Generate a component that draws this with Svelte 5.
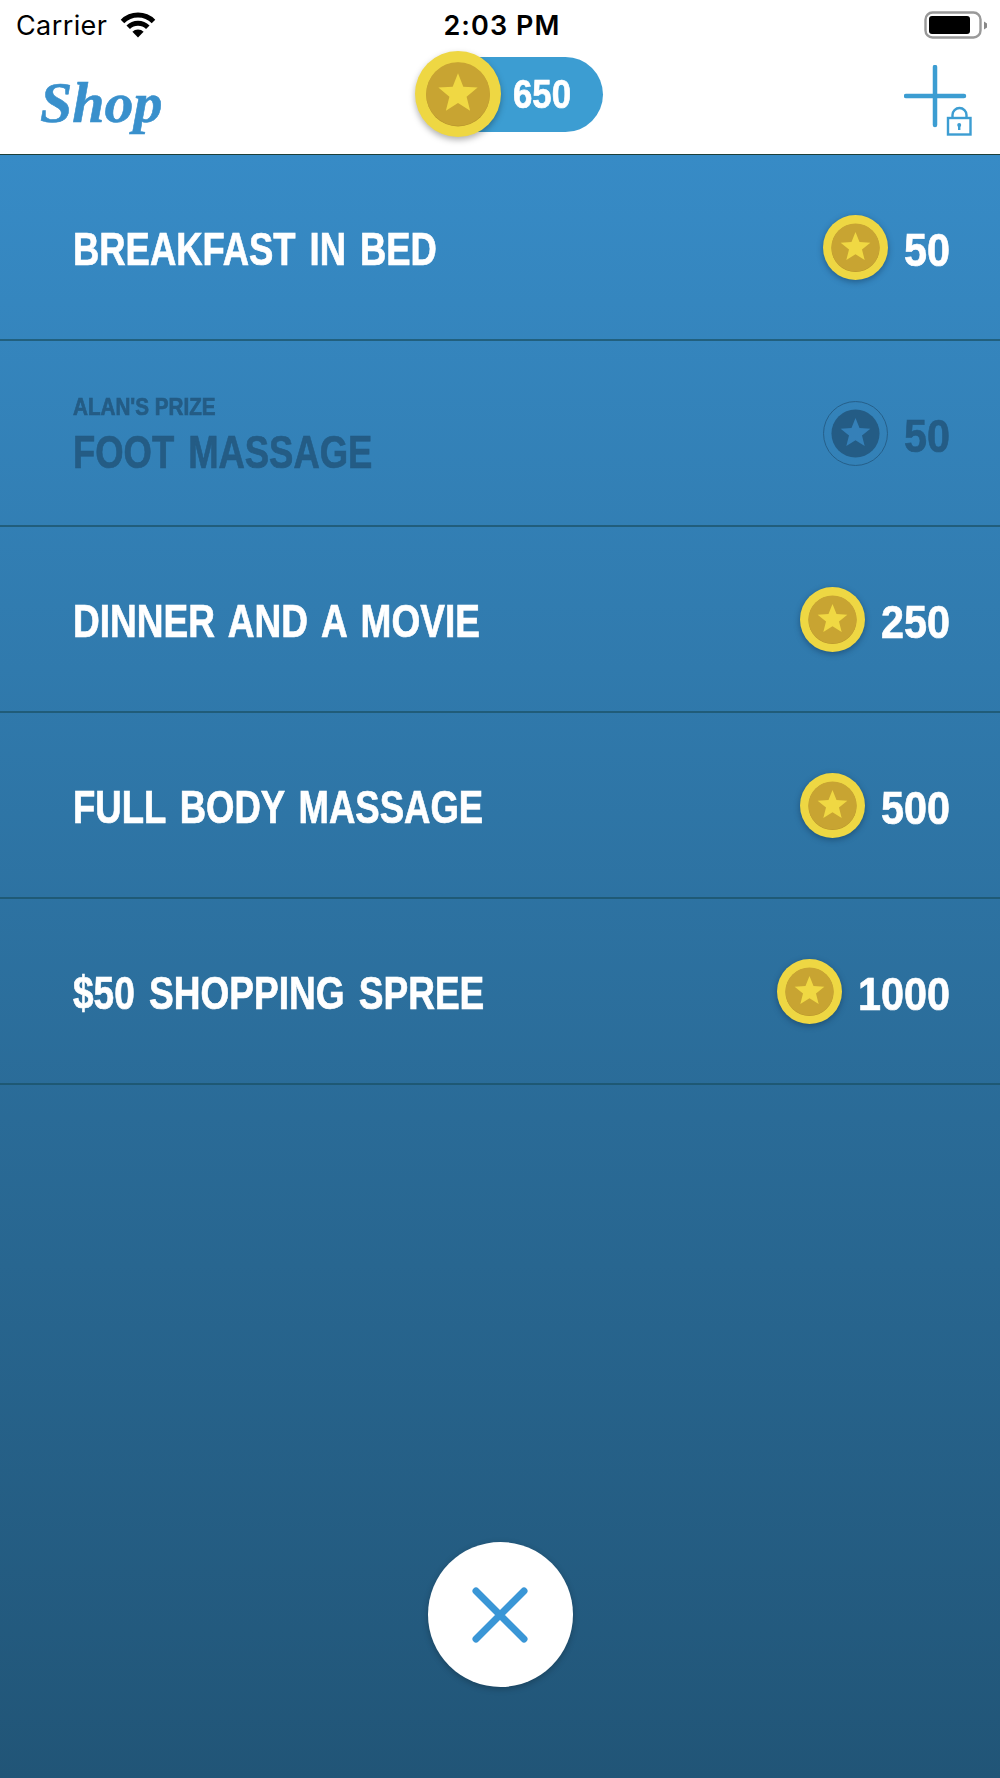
<script>
  // fit is the horizontal squeeze that brings each name to its condensed width
  const prizes = [
    { name: "BREAKFAST IN BED", cost: 50, fit: 0.775 },
    { name: "FOOT MASSAGE", cost: 50, fit: 0.775, owner: "ALAN'S PRIZE" },
    { name: "DINNER AND A MOVIE", cost: 250, fit: 0.788 },
    { name: "FULL BODY MASSAGE", cost: 500, fit: 0.777 },
    { name: "$50 SHOPPING SPREE", cost: 1000, fit: 0.788 },
  ];

  // five point star round the middle of a 100x100 box
  const star = Array.from({ length: 10 }, (_, i) => {
    const r = i % 2 ? 10.5 : 24;
    const a = (i * Math.PI) / 5;
    return `${(50 + r * Math.sin(a)).toFixed(2)},${(50 - r * Math.cos(a)).toFixed(2)}`;
  }).join(" ");
</script>

{#snippet coin(kind)}
  <svg class={["coin", kind]} viewBox="0 0 100 100" aria-hidden="true">
    {#if kind === "dim"}
      <circle cx="50" cy="50" r="49.2" fill="none" stroke="#245c85" stroke-width="1.4" />
      <circle cx="50" cy="50" r="37" fill="#245c85" />
      <polygon points={star} fill="#3580b8" />
    {:else}
      <circle cx="50" cy="50" r="50" fill="#eed743" />
      <circle cx="50" cy="50.8" r="37" fill="#b8942c" />
      <circle cx="50" cy="50" r="37" fill="#c8a432" />
      <polygon points={star} fill="#f0d843" />
    {/if}
  </svg>
{/snippet}

<div class="screen">
  <header>
    <div class="status">
      <div class="carrier">
        <span>Carrier</span>
        <svg class="wifi" viewBox="0 0 36 26" aria-hidden="true">
          <path d="M2.5 9.5a22 22 0 0 1 31 0" />
          <path d="M8.2 15.2a14 14 0 0 1 19.6 0" />
          <path class="tip" d="M18 25.5l-5.6-5.7a8 8 0 0 1 11.2 0z" />
        </svg>
      </div>
      <span class="time">2:03 PM</span>
      <svg class="battery" viewBox="0 0 64 28" aria-hidden="true">
        <rect x="1.5" y="1.5" width="55" height="25" rx="7" fill="none" stroke="#999" stroke-width="2.4" />
        <rect x="5" y="5" width="41" height="18" rx="3" fill="#000" />
        <path d="M60 10.5l3 2v4l-3 2z" fill="#888" />
      </svg>
    </div>
    <nav>
      <h1>Shop</h1>
      <div class="balance">
        {@render coin("big")}
        <span>650</span>
      </div>
      <svg class="add" viewBox="0 0 72 72" aria-hidden="true">
        <path d="M31 2v58M2 31h58" />
        <rect x="44" y="53" width="22.5" height="16.5" />
        <path class="thin" d="M48.5 53v-3a7 7 0 0 1 14 0v3" />
        <circle cx="55.2" cy="60" r="2" />
        <path class="thin" d="M55.2 60v5" />
      </svg>
    </nav>
  </header>

  <main>
    <ul>
      {#each prizes as prize}
        <li class:dim={prize.owner}>
          <div class="label">
            {#if prize.owner}<small>{prize.owner}</small>{/if}
            <span class="name" style:transform="scaleX({prize.fit})">{prize.name}</span>
          </div>
          <div class="cost">
            {@render coin(prize.owner ? "dim" : "small")}
            <span class="amount" style:width="{String(prize.cost).length * 23}px">{prize.cost}</span>
          </div>
        </li>
      {/each}
    </ul>
    <button aria-label="Close">
      <svg viewBox="0 0 56 56" aria-hidden="true">
        <path d="M4 4l48 48M52 4L4 52" />
      </svg>
    </button>
  </main>
</div>

<style>
  :global(body) {
    margin: 0;
  }

  .screen {
    width: 1000px;
    height: 1778px;
    display: flex;
    flex-direction: column;
    font-family: "Liberation Sans", sans-serif;
  }

  header {
    height: 155px;
    flex: none;
    box-sizing: border-box;
    background: #fff;
    border-bottom: 1px solid #1d3f3a;
  }

  .status {
    height: 50px;
    padding: 0 12px 0 16px;
    display: grid;
    grid-template-columns: 1fr auto 1fr;
    align-items: center;
    font-family: Inter, sans-serif;
    color: #000;
  }

  .carrier {
    display: flex;
    align-items: center;
    gap: 13px;
    font-size: 27px;
    letter-spacing: 0.4px;
  }

  .wifi {
    width: 36px;
    height: 26px;
    fill: none;
    stroke: #000;
    stroke-width: 5;
  }

  .wifi .tip {
    fill: #000;
    stroke: none;
  }

  .time {
    font-size: 27px;
    font-weight: 600;
    letter-spacing: 1.1px;
  }

  .battery {
    width: 64px;
    height: 28px;
    justify-self: end;
  }

  nav {
    height: 104px;
    display: grid;
    grid-template-columns: 415px auto 1fr;
    align-items: center;
  }

  h1 {
    margin: 0 0 0 40px;
    font: italic bold 58px "Liberation Serif", serif;
    color: #3990cc;
    -webkit-text-stroke: 0.6px #3990cc;
  }

  .balance {
    position: relative;
    width: 188px;
    height: 75px;
    margin-top: -16px;
    display: flex;
    align-items: center;
    justify-content: flex-end;
  }

  .balance::before {
    content: "";
    position: absolute;
    left: 25px;
    right: 0;
    top: 0;
    bottom: 0;
    border-radius: 38px;
    background: #3c9dd2;
  }

  .balance span {
    position: relative;
    width: 58px;
    margin-right: 32px;
    color: #fff;
    font-size: 40px;
    font-weight: 700;
    white-space: nowrap;
    -webkit-text-stroke-width: 0.7px;
    transform: scaleX(0.87);
    transform-origin: left;
  }

  .coin {
    flex: none;
    display: block;
  }

  .coin.small {
    width: 65px;
    height: 65px;
    filter: drop-shadow(0 2px 3px rgba(10, 40, 70, 0.45));
  }

  .coin.dim {
    width: 65px;
    height: 65px;
  }

  .coin.big {
    position: absolute;
    left: 0;
    top: -6px;
    width: 86px;
    height: 86px;
    filter: drop-shadow(0 3px 3px rgba(0, 0, 0, 0.3));
  }

  .add {
    justify-self: end;
    width: 72px;
    height: 72px;
    margin: -2px 24px 0 0;
    fill: none;
    stroke: #3c9dd2;
    stroke-width: 4.5;
    stroke-linecap: round;
  }

  .add rect,
  .add .thin {
    stroke-width: 2.4;
    stroke-linecap: butt;
  }

  .add circle {
    fill: #3c9dd2;
    stroke: none;
  }

  main {
    flex: 1;
    display: flex;
    flex-direction: column;
    align-items: center;
    background: linear-gradient(#378bc6, #215577);
  }

  ul {
    flex: 1;
    align-self: stretch;
    list-style: none;
    margin: 0;
    padding: 0;
  }

  li {
    height: 186px;
    box-sizing: border-box;
    padding: 0 50px 0 73px;
    display: flex;
    align-items: center;
    justify-content: space-between;
    border-bottom: 2px solid rgba(25, 80, 100, 0.7);
    color: #fff;
    font-size: 47px;
    font-weight: 700;
    -webkit-text-stroke-width: 0.7px;
  }

  li.dim {
    color: #245c85;
  }

  .label {
    display: flex;
    flex-direction: column;
    padding-top: 4px;
  }

  .name {
    line-height: 50px;
    white-space: nowrap;
    word-spacing: 5px;
    transform-origin: left;
  }

  small {
    font-size: 24px;
    line-height: 26px;
    margin-bottom: 7px;
    white-space: nowrap;
    transform: scaleX(0.86);
    transform-origin: left;
  }

  .cost {
    display: flex;
    align-items: center;
    gap: 16px;
  }

  .amount {
    margin-top: 4px;
    white-space: nowrap;
    transform: scaleX(0.88);
    transform-origin: left;
  }

  button {
    width: 145px;
    height: 145px;
    margin-bottom: 91px;
    padding: 0;
    border: 0;
    border-radius: 50%;
    background: #fff;
    box-shadow: 0 2px 6px rgba(0, 0, 0, 0.25);
    display: flex;
    align-items: center;
    justify-content: center;
  }

  button svg {
    width: 56px;
    height: 56px;
    fill: none;
    stroke: #3a96d6;
    stroke-width: 7;
    stroke-linecap: round;
  }
</style>
